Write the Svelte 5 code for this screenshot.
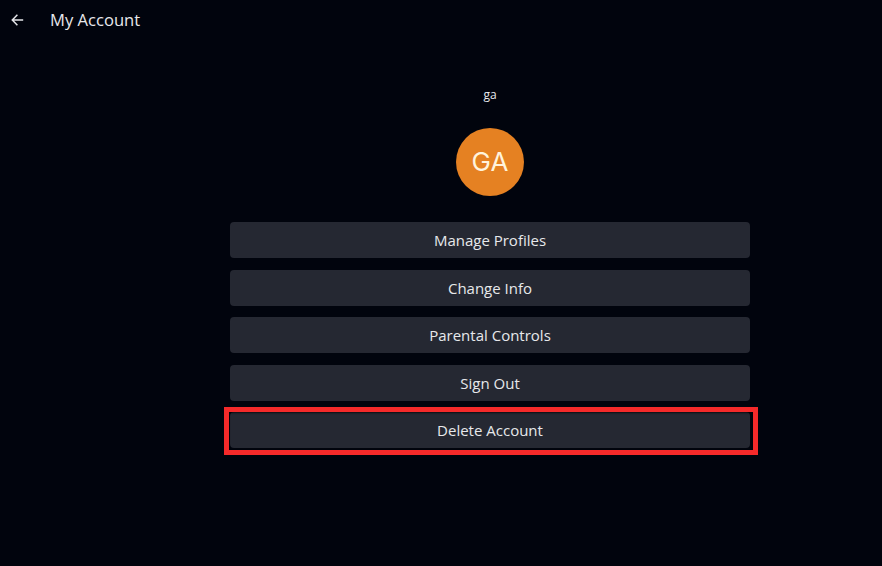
<script>
  const actions = ['Manage Profiles', 'Change Info', 'Parental Controls', 'Sign Out', 'Delete Account'];
</script>

<div class="screen">
  <header>
    <button class="back" aria-label="Back">
      <svg width="14" height="14" viewBox="0 0 14 14" fill="none" stroke="#e4e5e8" stroke-width="1.5">
        <path d="M13.2 7H2.5M7.4 1.8 2.3 7l5.1 5.2" />
      </svg>
    </button>
    <h1>My Account</h1>
  </header>
  <main>
    <p class="name">ga</p>
    <div class="avatar"><span>GA</span></div>
    <div class="actions">
      {#each actions as action}
        <div class="item">
          <button class="action">{action}</button>
          {#if action === 'Delete Account'}<span class="highlight"></span>{/if}
        </div>
      {/each}
    </div>
  </main>
</div>

<style>
  .screen {
    box-sizing: border-box;
    width: 882px;
    height: 566px;
    overflow: hidden;
    background: #01040d;
    color: #e7e8eb;
    font-family: "Open Sans", "Noto Sans", sans-serif;
  }
  button {
    border: 0;
    padding: 0;
    color: inherit;
    font-family: inherit;
  }
  header {
    display: flex;
    align-items: center;
    height: 40px;
    padding-left: 10px;
  }
  .back {
    display: flex;
    width: 40px;
    background: none;
  }
  h1 {
    margin: 0;
    font-size: 16.6px;
    font-weight: 400;
    line-height: 24px;
  }
  main {
    display: flex;
    flex-direction: column;
    align-items: center;
    width: 520px;
    margin-left: 230px;
    padding-top: 45px;
  }
  .name {
    margin: 0;
    font-size: 12px;
    line-height: 20px;
  }
  .avatar {
    display: flex;
    align-items: center;
    justify-content: center;
    width: 68px;
    height: 68px;
    margin-top: 23px;
    border-radius: 50%;
    background: #e58122;
    color: #fff3dc;
    font-family: Inter, sans-serif;
    font-size: 26px;
    line-height: 30px;
  }
  .actions {
    display: flex;
    flex-direction: column;
    gap: 11.5px;
    width: 100%;
    margin-top: 26.4px;
  }
  .item {
    position: relative;
    display: flex;
    height: 36px;
  }
  .action {
    width: 100%;
    border-radius: 4px;
    background: #252832;
    font-size: 15px;
    line-height: 36px;
  }
  .highlight {
    position: absolute;
    inset: -5.4px -8px -6.6px -6px;
    border: 5px solid #f52a2a;
    box-shadow: inset 0 1px 2px #000a;
    pointer-events: none;
  }
</style>
